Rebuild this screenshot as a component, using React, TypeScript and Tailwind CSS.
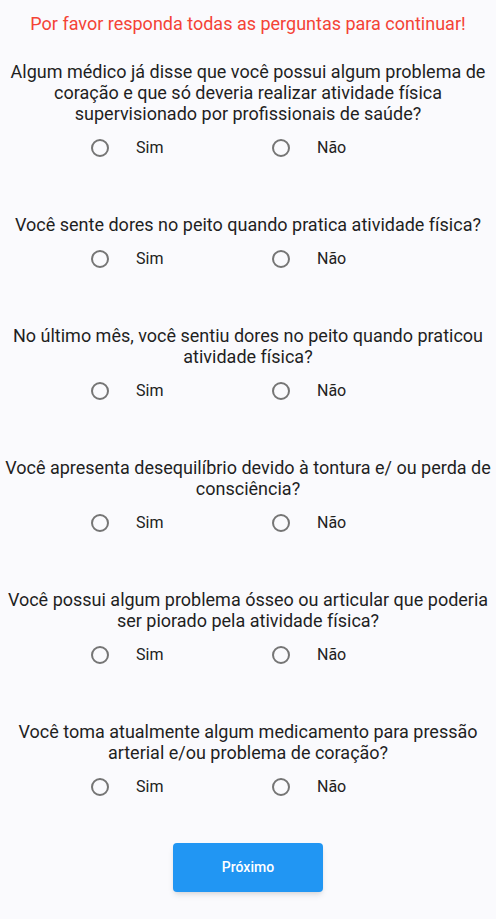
import { useState } from "react"

const questions = [
  "Algum médico já disse que você possui algum problema de coração e que só deveria realizar atividade física supervisionado por profissionais de saúde?",
  "Você sente dores no peito quando pratica atividade física?",
  "No último mês, você sentiu dores no peito quando praticou atividade física?",
  "Você apresenta desequilíbrio devido à tontura e/ ou perda de consciência?",
  "Você possui algum problema ósseo ou articular que poderia ser piorado pela atividade física?",
  "Você toma atualmente algum medicamento para pressão arterial e/ou problema de coração?",
]

function Radio({ checked, onClick }: { checked: boolean; onClick: () => void }) {
  return (
    <button className="w-12 h-12 flex items-center justify-center" onClick={onClick}>
      <span
        className={
          "w-[18px] h-[18px] rounded-full border-2 flex items-center justify-center " +
          (checked ? "border-[#2196F3]" : "border-[#757575]")
        }
      >
        {checked && <span className="w-2 h-2 rounded-full bg-[#2196F3]" />}
      </span>
    </button>
  )
}

export default function App() {
  const [answers, setAnswers] = useState<(string | null)[]>(questions.map(() => null))

  const choose = (i: number, value: string) => {
    const next = [...answers]
    next[i] = value
    setAnswers(next)
  }

  return (
    <div className="w-[496px] min-h-[919px] bg-[#FAFAFD] font-['Roboto',sans-serif] flex flex-col items-center pt-[13px]">
      <p className="text-[18px] leading-[21px] text-[#F44336] text-center">
        Por favor responda todas as perguntas para continuar!
      </p>
      <div className="flex flex-col gap-[42px] mt-[27px] w-full">
        {questions.map((q, i) => (
          <div key={i} className="flex flex-col">
            <p className="text-[18px] leading-[21px] text-[#1f1f1f] text-center">{q}</p>
            <div className="flex pl-[76px]">
              {["Sim", "Não"].map((opt) => (
                <div key={opt} className="w-[181px] flex items-center">
                  <Radio checked={answers[i] === opt} onClick={() => choose(i, opt)} />
                  <span className="ml-3 text-[16px] text-[#212121]">{opt}</span>
                </div>
              ))}
            </div>
          </div>
        ))}
      </div>
      <button className="mt-[32px] w-[150px] h-[49px] rounded bg-[#2196F3] text-white text-[14px] font-medium shadow-md">
        Próximo
      </button>
    </div>
  )
}
